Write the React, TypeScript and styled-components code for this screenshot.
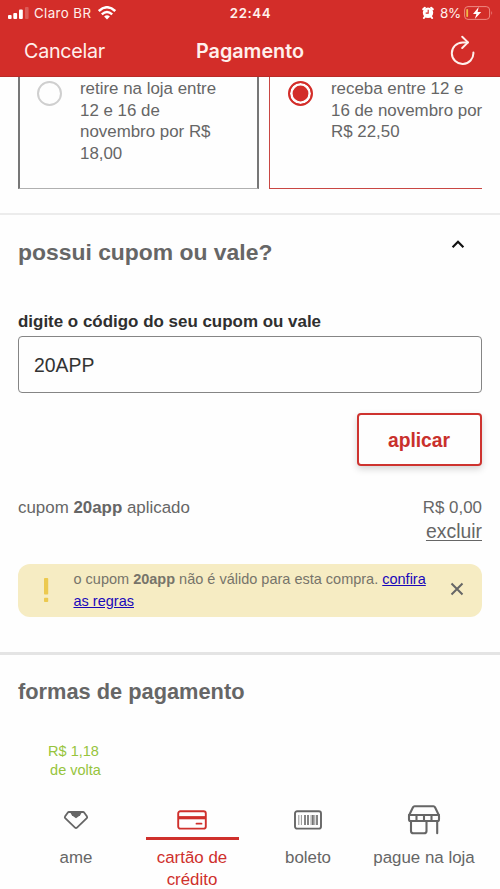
import React from "react";
import styled, { createGlobalStyle } from "styled-components";

const GlobalStyle = createGlobalStyle`
  * { box-sizing: border-box; }
  body { margin: 0; background: #fefefe; }
`;

const red = "#d32d29";
const gray = "#666";

const Screen = styled.div`
  width: 500px;
  height: 889px;
  overflow: hidden;
  background: #fefefe;
  color: ${gray};
  font-family: "Liberation Sans", Arial, sans-serif;
  font-size: 16.9px;
  line-height: 22px;
`;

const Header = styled.header`
  height: 77px;
  background: ${red};
  color: #fff0ec;
  border-bottom: 1px solid #b92b27;
  font-family: Inter, sans-serif;
`;

const StatusBar = styled.div`
  height: 25px;
  display: grid;
  grid-template-columns: 1fr auto 1fr;
  align-items: center;
  padding: 0 7px 0 8px;
  font-size: 13px;
  line-height: 24px;
`;

const StatusGroup = styled.div<{ $end?: boolean }>`
  display: flex;
  align-items: center;
  justify-content: ${(p) => (p.$end ? "flex-end" : "flex-start")};
`;

const Carrier = styled.span`
  margin: 0 7px 0 5px;
  font-size: 13.3px;
  letter-spacing: 0.4px;
`;

const Clock = styled.span`
  font-weight: 600;
  font-size: 13.3px;
  letter-spacing: 0.55px;
`;

const Battery = styled.span`
  margin: 0 3px 0 6px;
  font-size: 13.4px;
  letter-spacing: -0.2px;
`;

const NavBar = styled.nav`
  height: 52px;
  display: grid;
  grid-template-columns: 1fr auto 1fr;
  align-items: center;
  padding: 0 24px;
`;

const NavLink = styled.span`
  font-size: 19.7px;
  letter-spacing: -0.25px;
`;

const NavTitle = styled.h1`
  margin: 0;
  font-size: 19.8px;
  font-weight: 600;
`;

const RefreshButton = styled.div`
  justify-self: end;
  display: flex;
  margin-bottom: 2px;
`;

const Shipping = styled.section`
  height: 138px;
  padding: 0 18px;
  display: flex;
  gap: 10px;
  align-items: flex-start;
  border-bottom: 2px solid #ececec;
`;

const ShippingCard = styled.div<{ $selected?: boolean }>`
  width: ${(p) => (p.$selected ? "213px" : "241px")};
  height: 112px;
  display: flex;
  border-style: solid;
  border-width: ${(p) => (p.$selected ? "0 0 1px 1px" : "0 2px 1px 2px")};
  border-color: ${(p) => (p.$selected ? "#c94743" : "#777 #777 #b0b0b0")};
  padding-left: ${(p) => (p.$selected ? "18px" : "17px")};
`;

const Radio = styled.span<{ $selected?: boolean }>`
  flex: none;
  width: 25px;
  height: 25px;
  margin: 4px 18px 0 0;
  border-radius: 50%;
  border: 2px solid ${(p) => (p.$selected ? red : "#cfcfcf")};
  background: ${(p) => (p.$selected ? red : "#fefefe")};
  box-shadow: ${(p) => (p.$selected ? "inset 0 0 0 2.6px #fefefe" : "none")};
`;

const ShippingText = styled.p`
  margin: 1px 0 0;
  line-height: 21.7px;
  white-space: nowrap;
`;

const CouponHeader = styled.div`
  height: 78px;
  padding: 21px 35px 0 18px;
  display: flex;
  justify-content: space-between;
`;

const SectionTitle = styled.h2<{ $size: number }>`
  margin: 0;
  font-size: ${(p) => p.$size}px;
  line-height: 32px;
  font-weight: 700;
`;

const Chevron = styled.svg`
  margin-top: 1px;
`;

const CouponForm = styled.div`
  padding: 18px 18px 0;
  display: flex;
  flex-direction: column;
`;

const Label = styled.label`
  color: #2f2f2f;
  font-size: 16.95px;
  font-weight: 700;
  margin-bottom: 3px;
`;

const CodeInput = styled.input`
  height: 57px;
  border: 1px solid #858585;
  border-radius: 4px;
  background: #fefefe;
  color: #333;
  padding: 2px 15px 0;
  font: 19.4px "Liberation Sans", Arial, sans-serif;
  outline: none;
`;

const ApplyButton = styled.button`
  align-self: flex-end;
  margin-top: 20px;
  width: 125px;
  height: 53px;
  border: 2px solid #ce332f;
  border-radius: 4px;
  background: #fefefe;
  color: #c9302c;
  box-shadow: 0 3px 7px rgba(0, 0, 0, 0.17);
  padding: 2px 1px 0 0;
  font: 700 19.3px "Liberation Sans", Arial, sans-serif;
`;

const AppliedRow = styled.div`
  height: 98px;
  padding: 31px 18px 0;
  display: flex;
  justify-content: space-between;
  line-height: 22px;
`;

const Amount = styled.div`
  display: flex;
  flex-direction: column;
  align-items: flex-end;
`;

const RemoveLink = styled.a`
  font-size: 19.4px;
  line-height: 24px;
  text-decoration: underline;
  text-decoration-thickness: 1px;
  text-underline-offset: 2px;
`;

const Alert = styled.div`
  height: 53px;
  margin: 0 18px;
  border-radius: 12px;
  background: #f6ecc3;
  color: #77746a;
  display: flex;
  font-size: 14.5px;
  line-height: 22px;
`;

const AlertIcon = styled.svg`
  margin: 14px 21.5px 0 23px;
`;

const AlertText = styled.p`
  margin: 4px 0 0;
  width: 355px;
`;

const RulesLink = styled.a`
  color: #1a08ba;
  text-decoration: underline;
  text-underline-offset: 1px;
`;

const CloseIcon = styled.svg`
  margin: 18px 0 0 21px;
`;

const Payments = styled.section`
  margin-top: 35px;
  border-top: 3px solid #e4e4e4;
  padding: 21px 18px 0;
`;

const Tabs = styled.div`
  margin-top: 34px;
  display: grid;
  grid-template-columns: repeat(4, 116px);
`;

const Tab = styled.div<{ $active?: boolean }>`
  display: flex;
  flex-direction: column;
  align-items: center;
  text-align: center;
  color: ${(p) => (p.$active ? "#cf302c" : gray)};
`;

const Cashback = styled.div`
  height: 61px;
  color: #96c43c;
  font-size: 14.5px;
  line-height: 18.5px;
`;

const CashbackLine = styled.div<{ $shift: number }>`
  padding-right: ${(p) => p.$shift}px;
`;

const TabIcon = styled.div`
  height: 34px;
  display: flex;
  align-items: center;
`;

const TabLine = styled.div<{ $active?: boolean }>`
  width: 93px;
  height: 3px;
  background: ${(p) => (p.$active ? "#cf302c" : "transparent")};
`;

const TabLabel = styled.div`
  margin-top: 7px;
  font-size: 16.9px;
  line-height: 21.7px;
  white-space: nowrap;
`;

const SignalIcon = () => (
  <svg width="21" height="12" viewBox="0 0 21 12" fill="#fff">
    <rect x="0" y="8" width="3.6" height="4" rx="1" />
    <rect x="5.3" y="6" width="3.8" height="6" rx="1" />
    <rect x="11" y="2.5" width="3.8" height="9.5" rx="1" />
    <rect x="17" y="0" width="3.6" height="12" rx="1" opacity=".22" />
  </svg>
);

const WifiIcon = () => (
  <svg width="18" height="14" viewBox="0 0 18 14" fill="none" stroke="#fff" strokeWidth="2.4">
    <path d="M.8 5Q9-2.6 17.2 5M3.8 8.3Q9 3.6 14.2 8.3" />
    <path d="M6.1 10.5Q9 7.9 11.9 10.5L9 13.4Z" fill="#fff" stroke="none" />
  </svg>
);

const AlarmIcon = () => (
  <svg width="12" height="13" viewBox="0 0 12 13">
    <circle cx="6" cy="6.8" r="5.2" fill="#fff" />
    <path d="M1.2 3.2 2.8 1.7M9.2 1.7 10.8 3.2M2.8 10.8 1.9 12M9.2 10.8 10.1 12" stroke="#fff" strokeWidth="2" strokeLinecap="round" />
    <path d="M6.2 3.8V7.1H3.7" fill="none" stroke={red} strokeWidth="1.1" />
  </svg>
);

const BatteryIcon = () => (
  <svg width="29" height="14" viewBox="0 0 29 14">
    <rect x=".6" y=".6" width="25" height="12.8" rx="3.4" fill="none" stroke="#ee8982" strokeWidth="1" />
    <rect x="2.3" y="3" width="1.8" height="8" rx=".8" fill="#f3b944" />
    <path d="M27.3 4.8Q29 7 27.3 9.2Z" fill="#ee8982" />
    <path d="M14.7 1 9 7.9H12.4L10.8 13 17.2 6.1H13.6Z" fill="#fff" />
  </svg>
);

const RefreshIcon = () => (
  <svg width="26" height="30" viewBox="0 0 26 30" fill="none" stroke="#fff0ec" strokeWidth="2" strokeLinecap="round" strokeLinejoin="round">
    <path d="M17.8 7.4H12.6A10.8 10.8 0 1 0 23.4 17.6" />
    <path d="M12.2 1.8 18 7.4 12.2 13" />
  </svg>
);

const AmeIcon = () => (
  <svg width="26" height="20" viewBox="0 0 26 20">
    <path d="M6 2H20Q20.8 2 21.3 2.7L24 6.6Q24.5 7.5 23.8 8.2L14 17.6Q13 18.5 12 17.6L2.2 8.2Q1.5 7.5 2 6.6L4.7 2.7Q5.2 2 6 2Z" fill="none" stroke="#666" strokeWidth="1.8" />
    <path d="M7 2H19L17.2 5.2 13 8.3 8.8 5.2Z" fill="#666" />
  </svg>
);

const CardIcon = () => (
  <svg width="30" height="20" viewBox="0 0 30 20">
    <rect x="1.2" y="1.2" width="27.6" height="17.4" rx="2.2" fill="none" stroke="#cf302c" strokeWidth="1.9" />
    <path d="M1 7.7H29" stroke="#cf302c" strokeWidth="3.2" />
    <path d="M19.5 13.7H24.5" stroke="#cf302c" strokeWidth="1.8" strokeLinecap="round" />
  </svg>
);

const BarcodeIcon = () => (
  <svg width="28" height="20" viewBox="0 0 28 20">
    <rect x="1" y="1.2" width="26" height="17.4" rx="2.2" fill="none" stroke="#666" strokeWidth="1.9" />
    <path d="M4.8 5V15M7.4 5V15M17.1 5V15M20.8 5V15" stroke="#888" strokeWidth=".9" />
    <path d="M11 5V15M14 5V15M18.9 5V15M23 5V15" stroke="#666" strokeWidth="1.6" />
  </svg>
);

const StoreIcon = () => (
  <svg width="34" height="32" viewBox="0 0 34 32" fill="none" stroke="#666" strokeWidth="2.1" strokeLinejoin="round" strokeLinecap="round">
    <path d="M7.5 2.2H26.5Q27.5 2.2 28 3.2L32 11.5V15.5Q32 17 30.5 17H3.5Q2 17 2 15.5V11.5L6 3.2Q6.5 2.2 7.5 2.2Z" />
    <path d="M2 11H32M9.5 11V17M17 11V17M24.5 11V17" />
    <path d="M4 17V27Q4 29.3 6.5 29.3H17Q19.5 29.3 19.5 27V17M30.2 17V29.3" />
  </svg>
);

const tabs = [
  { label: ["ame"], icon: <AmeIcon />, cashback: true },
  { label: ["cartão de", "crédito"], icon: <CardIcon />, active: true },
  { label: ["boleto"], icon: <BarcodeIcon /> },
  { label: ["pague na loja"], icon: <StoreIcon /> },
];

export default function App() {
  return (
    <Screen>
      <GlobalStyle />
      <Header>
        <StatusBar>
          <StatusGroup>
            <SignalIcon />
            <Carrier>Claro BR</Carrier>
            <WifiIcon />
          </StatusGroup>
          <Clock>22:44</Clock>
          <StatusGroup $end>
            <AlarmIcon />
            <Battery>8%</Battery>
            <BatteryIcon />
          </StatusGroup>
        </StatusBar>
        <NavBar>
          <NavLink>Cancelar</NavLink>
          <NavTitle>Pagamento</NavTitle>
          <RefreshButton><RefreshIcon /></RefreshButton>
        </NavBar>
      </Header>

      <Shipping>
        <ShippingCard>
          <Radio />
          <ShippingText>retire na loja entre<br />12 e 16 de<br />novembro por R$<br />18,00</ShippingText>
        </ShippingCard>
        <ShippingCard $selected>
          <Radio $selected />
          <ShippingText>receba entre 12 e<br />16 de novembro por<br />R$ 22,50</ShippingText>
        </ShippingCard>
      </Shipping>

      <CouponHeader>
        <SectionTitle $size={22.9}>possui cupom ou vale?</SectionTitle>
        <Chevron width="14" height="14" viewBox="0 0 14 14" fill="none" stroke="#111" strokeWidth="2.2">
          <path d="M1.6 10.2 7 4.8 12.4 10.2" />
        </Chevron>
      </CouponHeader>

      <CouponForm>
        <Label htmlFor="coupon">digite o código do seu cupom ou vale</Label>
        <CodeInput id="coupon" defaultValue="20APP" />
        <ApplyButton>aplicar</ApplyButton>
      </CouponForm>

      <AppliedRow>
        <span>cupom <b>20app</b> aplicado</span>
        <Amount>
          <span>R$ 0,00</span>
          <RemoveLink>excluir</RemoveLink>
        </Amount>
      </AppliedRow>

      <Alert>
        <AlertIcon width="11" height="26" viewBox="0 0 11 26" fill="#ecc94f">
          <rect x="3" y="0" width="4.2" height="16.5" rx=".8" />
          <rect x="3" y="19.8" width="4.2" height="4.2" rx=".8" />
        </AlertIcon>
        <AlertText>
          o cupom <b>20app</b> não é válido para esta compra. <RulesLink>confira<br />as regras</RulesLink>
        </AlertText>
        <CloseIcon width="14" height="14" viewBox="0 0 14 14" stroke="#666" strokeWidth="2">
          <path d="M1.5 1.5 12.5 12.5M12.5 1.5 1.5 12.5" />
        </CloseIcon>
      </Alert>

      <Payments>
        <SectionTitle $size={21.8}>formas de pagamento</SectionTitle>
        <Tabs>
          {tabs.map((t) => (
            <Tab key={t.label[0]} $active={t.active}>
              <Cashback>
                {t.cashback && (
                  <>
                    <CashbackLine $shift={5}>R$ 1,18</CashbackLine>
                    <CashbackLine $shift={1}>de volta</CashbackLine>
                  </>
                )}
              </Cashback>
              <TabIcon>{t.icon}</TabIcon>
              <TabLine $active={t.active} />
              <TabLabel>
                {t.label.map((line) => <div key={line}>{line}</div>)}
              </TabLabel>
            </Tab>
          ))}
        </Tabs>
      </Payments>
    </Screen>
  );
}
